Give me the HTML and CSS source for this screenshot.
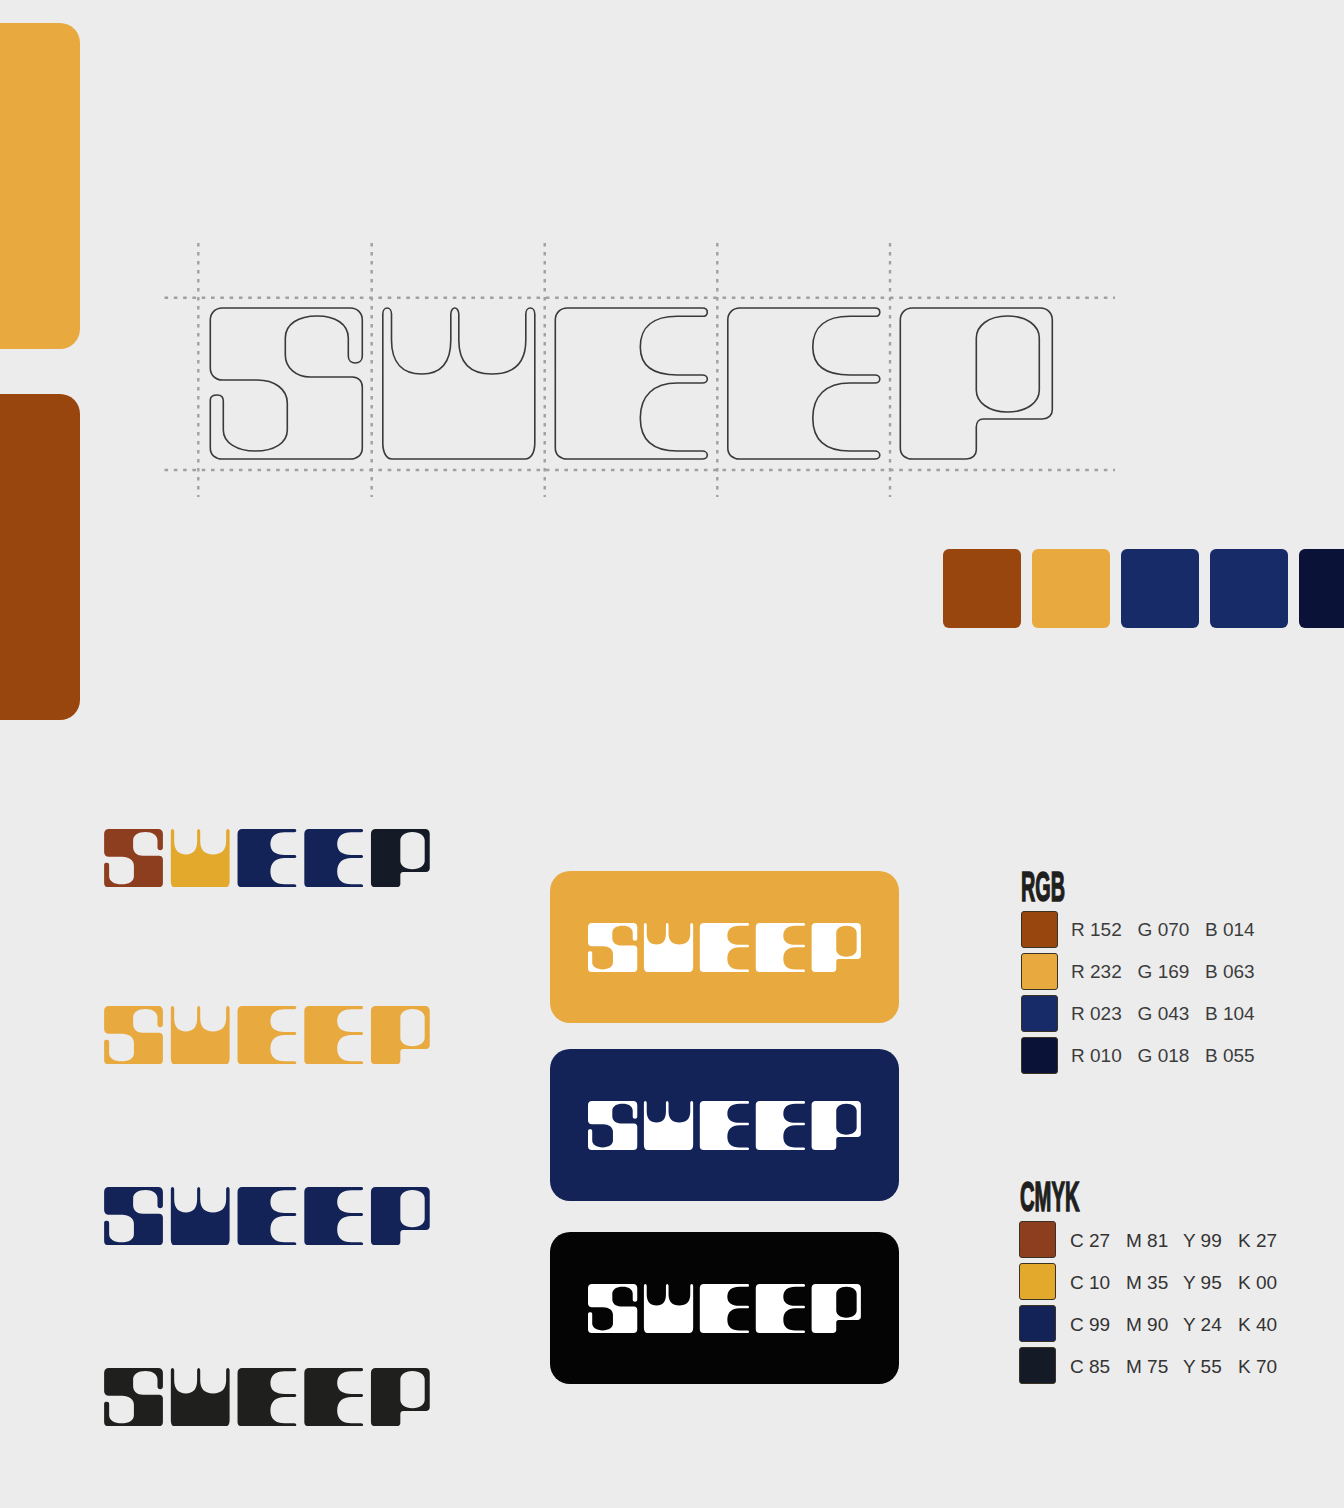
FILE: index.html
```html
<!DOCTYPE html>
<html lang="en">
<head>
<meta charset="utf-8">
<title>Sweep brand sheet</title>
<link rel="stylesheet" href="styles.css">
</head>
<body>
<svg class="defs" aria-hidden="true">
  <defs>
    <path id="ls" d="M12 0H140C147 0 152 5 152 12V48C152 52.500 149 55 145 55C141 55 138 52.500 138 48V30C138 16 125 8 107 8C88 8 75 16 75 30V47C75 60 86 69 100 69H142C148 69 152 73 152 79V140C152 147 147 151 140 151H12C5 151 0 147 0 140V92C0 88.500 3 87 7 87C11 87 13 89 13 93V122C13 135 27 143 45 143C64 143 77 135 77 122V95C77 81 64 72 47 72H12C5 72 0 67 0 60V12C0 5 5 0 12 0Z"/>
    <path id="lw" d="M0 6C0 2.500 2 0 4.350 0C6.700 0 8.700 2.500 8.700 6V32C8.700 55 20 66 39 66C58 66 68 55 68 32V6C68 2.500 70 0 72 0C74 0 76 2.500 76 6V32C76 55 88 66 109 66C131 66 143 55 143 32V6C143 2.500 145 0 147.500 0C150 0 152 2.500 152 6V135C152 145 148 151 142 151H9C4 151 0 145 0 135Z"/>
    <path id="le" d="M12 0H147C150 0 152 1.800 152 4.150C152 6.500 150 8.300 147 8.300H122C98 8.300 85 19 85 39C85 58 98 67 122 67H147C150 67 152 68.800 152 71C152 73.200 150 75 147 75H122C98 75 85 88 85 110C85 132 98 143 122 143H147C150 143 152 145 152 147C152 149.200 150 151 147 151H12C5 151 0 147 0 140V12C0 5 5 0 12 0Z"/>
    <path id="lp" fill-rule="evenodd" d="M12 0H140C147 0 152 5 152 12V102C152 107 148 111 142 111H83C79 111 76 114 76 119V142C76 147 72 151 66 151H12C5 151 0 147 0 140V12C0 5 5 0 12 0ZM107 8C88 8 76 18 76 30V82C76 94 88 104 107 104C127 104 139 94 139 82V30C139 18 127 8 107 8Z"/>
  </defs>
</svg>

<main class="sheet">
  <section class="top">
    <div class="bars">
      <div class="bar bar-amber"></div>
      <div class="bar bar-rust"></div>
    </div>
    <div class="top-main">
      <svg class="construction" viewBox="0 0 960 260" role="img" aria-label="Sweep logo construction">
        <g class="guides">
          <path class="guide-h" d="M4.500 57.700H955"/>
          <path class="guide-h" d="M4.500 230H955"/>
          <path class="guide-v" d="M38.300 3V257"/>
          <path class="guide-v" d="M211.700 3V257"/>
          <path class="guide-v" d="M384.700 3V257"/>
          <path class="guide-v" d="M557.300 3V257"/>
          <path class="guide-v" d="M730 3V257"/>
        </g>
        <g class="outline" transform="translate(50.300 68)">
          <use href="#ls"/>
          <use href="#lw" x="172.500"/>
          <use href="#le" x="345"/>
          <use href="#le" x="517.500"/>
          <use href="#lp" x="690"/>
        </g>
      </svg>
      <div class="swatches">
        <div class="swatch c-rust"></div>
        <div class="swatch c-amber"></div>
        <div class="swatch c-navy"></div>
        <div class="swatch c-navy"></div>
        <div class="swatch c-ink"></div>
      </div>
    </div>
  </section>

  <section class="bottom">
    <div class="logos">
      <svg class="logo logo-multi" viewBox="0 0 842.400 151" role="img" aria-label="Sweep">
        <use href="#ls" class="f-rust"/><use href="#lw" x="172.500" class="f-gold"/><use href="#le" x="345" class="f-navy"/><use href="#le" x="517.700" class="f-navy"/><use href="#lp" x="690" class="f-coal"/>
      </svg>
      <svg class="logo logo-amber" viewBox="0 0 842.400 151" role="img" aria-label="Sweep">
        <use href="#ls"/><use href="#lw" x="172.500"/><use href="#le" x="345"/><use href="#le" x="517.700"/><use href="#lp" x="690"/>
      </svg>
      <svg class="logo logo-navy" viewBox="0 0 842.400 151" role="img" aria-label="Sweep">
        <use href="#ls"/><use href="#lw" x="172.500"/><use href="#le" x="345"/><use href="#le" x="517.700"/><use href="#lp" x="690"/>
      </svg>
      <svg class="logo logo-black" viewBox="0 0 842.400 151" role="img" aria-label="Sweep">
        <use href="#ls"/><use href="#lw" x="172.500"/><use href="#le" x="345"/><use href="#le" x="517.700"/><use href="#lp" x="690"/>
      </svg>
    </div>

    <div class="cards">
      <div class="card card-amber">
        <svg class="card-logo" viewBox="0 0 842.400 151" role="img" aria-label="Sweep"><use href="#ls"/><use href="#lw" x="172.500"/><use href="#le" x="345"/><use href="#le" x="517.700"/><use href="#lp" x="690"/></svg>
      </div>
      <div class="card card-navy">
        <svg class="card-logo" viewBox="0 0 842.400 151" role="img" aria-label="Sweep"><use href="#ls"/><use href="#lw" x="172.500"/><use href="#le" x="345"/><use href="#le" x="517.700"/><use href="#lp" x="690"/></svg>
      </div>
      <div class="card card-black">
        <svg class="card-logo" viewBox="0 0 842.400 151" role="img" aria-label="Sweep"><use href="#ls"/><use href="#lw" x="172.500"/><use href="#le" x="345"/><use href="#le" x="517.700"/><use href="#lp" x="690"/></svg>
      </div>
    </div>

    <div class="palettes">
      <div class="palette palette-rgb">
        <h2 class="palette-title"><span class="title-rgb">RGB</span></h2>
        <div class="row"><span class="chip c-rust"></span><span>R 152</span><span>G 070</span><span>B 014</span></div>
        <div class="row"><span class="chip c-amber"></span><span>R 232</span><span>G 169</span><span>B 063</span></div>
        <div class="row"><span class="chip c-navy"></span><span>R 023</span><span>G 043</span><span>B 104</span></div>
        <div class="row"><span class="chip c-ink"></span><span>R 010</span><span>G 018</span><span>B 055</span></div>
      </div>
      <div class="palette palette-cmyk">
        <h2 class="palette-title"><span class="title-cmyk">CMYK</span></h2>
        <div class="row"><span class="chip p-rust"></span><span>C 27</span><span>M 81</span><span>Y 99</span><span>K 27</span></div>
        <div class="row"><span class="chip p-gold"></span><span>C 10</span><span>M 35</span><span>Y 95</span><span>K 00</span></div>
        <div class="row"><span class="chip p-navy"></span><span>C 99</span><span>M 90</span><span>Y 24</span><span>K 40</span></div>
        <div class="row"><span class="chip p-coal"></span><span>C 85</span><span>M 75</span><span>Y 55</span><span>K 70</span></div>
      </div>
    </div>
  </section>
</main>
</body>
</html>
```

FILE: styles.css
```css
* { box-sizing: border-box; }

html, body {
  margin: 0;
  background: #ececec;
}

.defs {
  position: absolute;
  width: 0;
  height: 0;
}

.sheet {
  width: 1344px;
  height: 1508px;
  overflow: hidden;
  background: #ececec;
  font-family: "Liberation Sans", Arial, sans-serif;
}

/* Top */
.top {
  display: grid;
  grid-template-columns: 80px minmax(0, 1fr);
  height: 829px;
}

.bars {
  display: flex;
  flex-direction: column;
  gap: 45px;
  padding-top: 23px;
}

.bar {
  height: 326px;
  border-radius: 0 20px 20px 0;
}

.bar-amber { background: #e8a93f; }
.bar-rust { background: #98460e; }

.top-main {
  padding: 240px 0 0 80px;
  overflow: hidden;
}

.construction {
  display: block;
  width: 960px;
  height: 260px;
}

.guides path {
  fill: none;
  stroke: #a0a0a0;
  stroke-width: 2.4;
}

.guide-h { stroke-dasharray: 3.6 5.7; }
.guide-v { stroke-dasharray: 3.6 5.4; }

.outline use {
  fill: none;
  stroke: #3a3a3a;
  stroke-width: 1.6;
}

.swatches {
  display: flex;
  gap: 11px;
  margin: 49px 0 0 783px;
}

.swatch {
  flex: 0 0 78px;
  height: 79px;
  border-radius: 6px;
}

.c-rust { background: #98460e; }
.c-amber { background: #e8a93f; }
.c-navy { background: #172b68; }
.c-ink { background: #0a1237; }
.p-rust { background: #8d3e1f; }
.p-gold { background: #e3a92d; }
.p-navy { background: #132358; }
.p-coal { background: #141b27; }

/* Bottom */
.bottom {
  display: flex;
  padding-left: 104px;
}

.logos {
  display: flex;
  flex-direction: column;
  flex: 0 0 326px;
}

.logo {
  display: block;
  width: 326px;
  height: 58.400px;
  margin-bottom: 122.600px;
}

.logo-multi { margin-bottom: 118.600px; }

.f-rust { fill: #8d3e1f; }
.f-gold { fill: #e3a92d; }
.f-navy { fill: #132358; }
.f-coal { fill: #141b27; }
.logo-amber { fill: #e8a93f; }
.logo-navy { fill: #132358; }
.logo-black { fill: #1f1f1d; }

.cards {
  display: flex;
  flex-direction: column;
  flex: 0 0 349px;
  margin-left: 120px;
  padding-top: 42px;
}

.card {
  display: flex;
  align-items: center;
  justify-content: center;
  height: 152px;
  border-radius: 20px;
}

.card-amber { background: #e8a93f; }
.card-navy { background: #132358; margin-top: 26px; }
.card-black { background: #040404; margin-top: 31px; }

.card-logo {
  display: block;
  width: 273px;
  height: 49px;
  fill: #fff;
}

.palettes {
  flex: 0 0 auto;
  margin-left: 122px;
  padding-top: 42px;
}

.palette-cmyk {
  margin: 104.800px 0 0 -2px;
}

.palette-title {
  height: 31px;
  margin: 0 0 7px;
  font-size: 43px;
  font-weight: 700;
  line-height: 31px;
  color: #1f1f1d;
  white-space: nowrap;
  -webkit-text-stroke: 1.6px #1f1f1d;
}

.palette-cmyk .palette-title { margin-left: 1px; }

.title-rgb,
.title-cmyk {
  display: inline-block;
  transform-origin: left center;
}

.title-rgb { transform: scaleX(0.46); }
.title-cmyk { transform: scaleX(0.47); }

.row {
  display: grid;
  align-items: center;
  height: 41.800px;
  font-size: 19px;
  white-space: nowrap;
}

.palette-rgb .row {
  grid-template-columns: 50px 66.600px 67.400px auto;
  color: #3c3c3c;
}

.palette-cmyk .row {
  grid-template-columns: 51px 56px 57px 55px auto;
  color: #333;
}

.palette-rgb .row span:not(.chip) { padding-top: 1px; }
.palette-cmyk .row span:not(.chip) { padding-top: 3px; }

.chip {
  width: 37px;
  height: 37px;
  border: 1px solid #3a3324;
  border-radius: 3px;
}
```
